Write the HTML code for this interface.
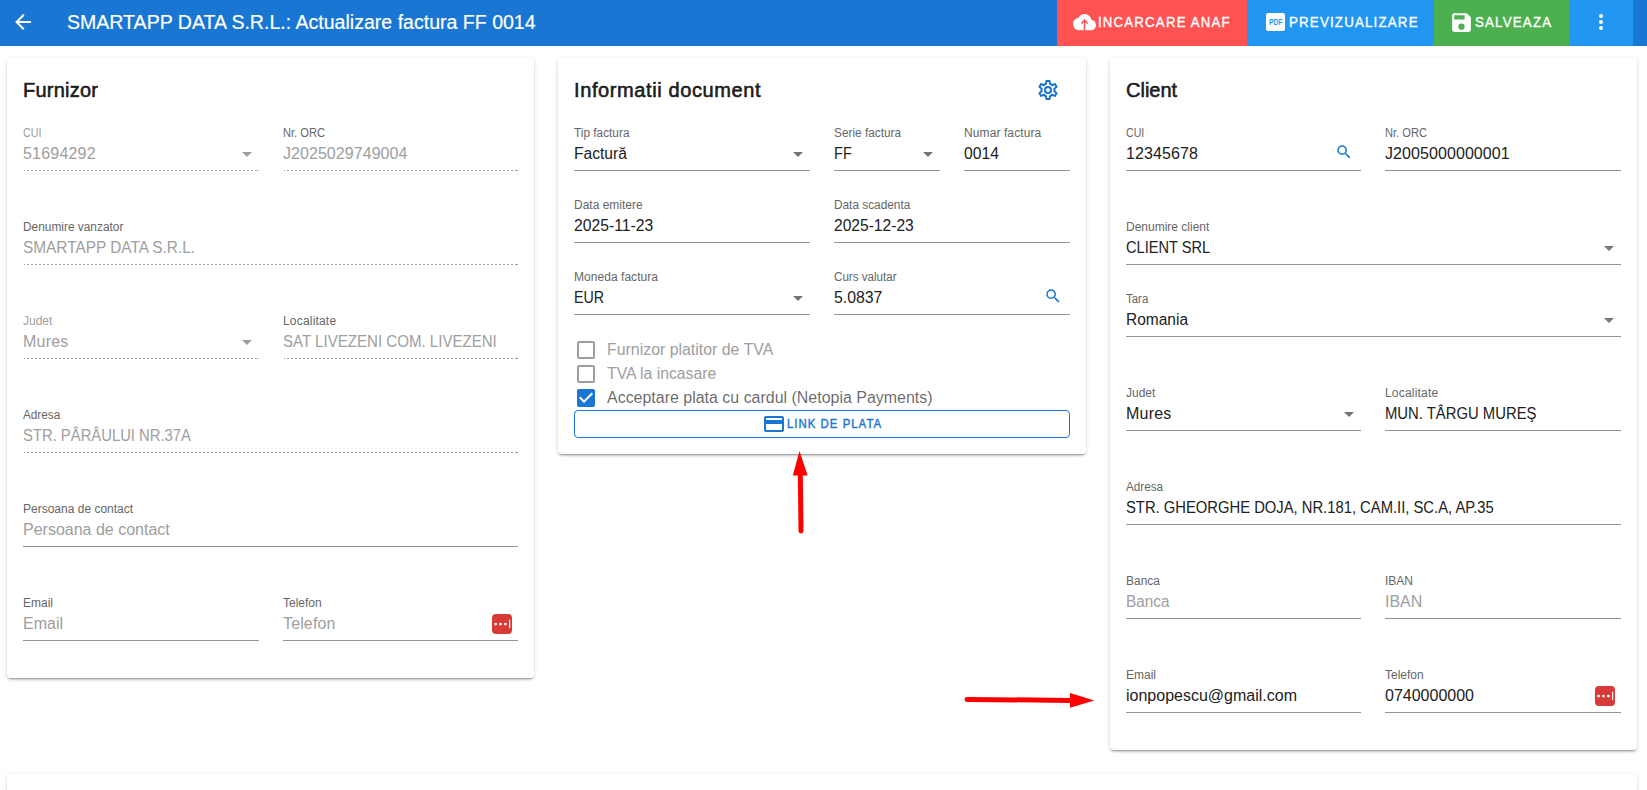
<!DOCTYPE html><html><head><meta charset="utf-8"><title>Actualizare factura</title><style>
*{margin:0;padding:0;box-sizing:border-box}
html,body{width:1647px;height:790px;overflow:hidden;background:#fff;font-family:"Liberation Sans",sans-serif;color:#212121}
.hdr{position:absolute;left:0;top:0;width:1647px;height:46px;background:#1976d2}
.card{position:absolute;background:#fff;border-radius:4px;box-shadow:0 3px 1px -2px rgba(0,0,0,.2),0 2px 2px 0 rgba(0,0,0,.14),0 1px 5px 0 rgba(0,0,0,.12)}
.ttl{position:absolute;font-size:20px;line-height:20px;white-space:nowrap;color:rgba(0,0,0,.87);-webkit-text-stroke:0.6px rgba(0,0,0,.87)}
.f{position:absolute;height:43px}
.f .lab,.f .labd{position:absolute;left:0;top:-1px;font-size:12px;line-height:12px;color:#666666;white-space:nowrap}
.f .labd{color:#9e9e9e}
.f .val,.f .vald,.f .ph{position:absolute;left:0;top:18px;font-size:16px;line-height:16px;color:#212121;white-space:nowrap}
.f .vald,.f .ph{color:#9e9e9e}
.f .u{position:absolute;left:0;right:0;top:42px;height:1px}
.f .u.solid{background:#949494}
.f .u.dash{background:linear-gradient(#fff,#fff) left top/1px 1px no-repeat,linear-gradient(rgba(0,0,0,.38),rgba(0,0,0,.38)) right top/1px 1px no-repeat,repeating-linear-gradient(to right,rgba(0,0,0,.38) 0,rgba(0,0,0,.38) 2px,transparent 2px,transparent 4px)}
.dd{position:absolute;right:0;top:14px;fill:#757575}
.dis .dd{fill:#9e9e9e}
.btn{position:absolute;top:0;height:46px;color:#fff;font-size:14px;white-space:nowrap}
.btn span{position:absolute;top:15px;line-height:14px;-webkit-text-stroke:0.35px #fff}
.btn svg{position:absolute;fill:#fff}
.cb{position:absolute;left:577px;width:18px;height:18px;border:2px solid rgba(0,0,0,.38);border-radius:2px}
.cbt{position:absolute;left:607px;font-size:16px;line-height:16px;white-space:nowrap;color:rgba(0,0,0,.6)}
.lp{position:absolute;width:20px;height:20px;background:#d93a37;border-radius:4px}
</style></head><body>
<div class="hdr"></div>
<svg style="position:absolute;left:11px;top:10px" width="24" height="24" viewBox="0 0 24 24"><path fill="#fff" d="M20,11V13H8L13.5,18.5L12.08,19.92L4.16,12L12.08,4.08L13.5,5.5L8,11H20Z"/></svg>
<div id="t1" style="position:absolute;left:67px;top:12px;font-size:20px;line-height:20px;color:#fff;white-space:nowrap;-webkit-text-stroke:0.2px #fff;transform:scaleX(0.9774);transform-origin:0 0">SMARTAPP DATA S.R.L.: Actualizare factura FF 0014</div>
<div class="btn" style="left:1057px;width:190px;background:#ff5252"><svg style="left:16px;top:9.8px" width="23" height="24.2" viewBox="0 0 24 24" preserveAspectRatio="none"><path d="M19.35,10.03C18.67,6.59 15.64,4 12,4C9.11,4 6.6,5.64 5.35,8.03C2.34,8.36 0,10.9 0,14A6,6 0 0,0 6,20H19A5,5 0 0,0 24,15C24,12.36 21.95,10.22 19.35,10.03Z"/><path d="M12,20.5V9.8M8.7,13.4L12,10L15.3,13.4" fill="none" stroke="#ff5252" stroke-width="1.6"/></svg><span style="left:41px;letter-spacing:1.250px;transform:scaleX(0.9460);transform-origin:0 0" id="t2">INCARCARE ANAF</span></div>
<div class="btn" style="left:1247px;width:187px;background:#2196f3"><div style="position:absolute;left:19.4px;top:13px;width:18.4px;height:18px;background:#fff;border-radius:2px"></div><div style="position:absolute;left:21.9px;top:18.6px;width:16px;font-size:8.2px;line-height:8px;font-weight:700;color:#2196f3;transform:scaleX(0.83);transform-origin:0 0;letter-spacing:0">PDF</div><span style="left:42px;letter-spacing:1.250px;transform:scaleX(0.9500);transform-origin:0 0" id="t3">PREVIZUALIZARE</span></div>
<div class="btn" style="left:1434px;width:135px;background:#4caf50"><svg style="left:15.3px;top:9.9px" width="25" height="25" viewBox="0 0 24 24"><path d="M15,9H5V5H15M12,19A3,3 0 0,1 9,16A3,3 0 0,1 12,13A3,3 0 0,1 15,16A3,3 0 0,1 12,19M17,3H5C3.89,3 3,3.9 3,5V19A2,2 0 0,0 5,21H19A2,2 0 0,0 21,19V7L17,3Z"/></svg><span style="left:41px;letter-spacing:1.250px;transform:scaleX(0.9500);transform-origin:0 0" id="t4">SALVEAZA</span></div>
<div class="btn" style="left:1569px;width:64px;background:#2196f3"><svg style="left:20px;top:10px" width="24" height="24" viewBox="0 0 24 24"><path d="M12,16A2,2 0 0,1 14,18A2,2 0 0,1 12,20A2,2 0 0,1 10,18A2,2 0 0,1 12,16M12,10A2,2 0 0,1 14,12A2,2 0 0,1 12,14A2,2 0 0,1 10,12A2,2 0 0,1 12,10M12,4A2,2 0 0,1 14,6A2,2 0 0,1 12,8A2,2 0 0,1 10,6A2,2 0 0,1 12,4Z"/></svg></div>
<div class="card" style="left:7px;top:58px;width:527px;height:620px"></div>
<div class="card" style="left:558px;top:58px;width:528px;height:396px"></div>
<div class="card" style="left:1110px;top:58px;width:527px;height:692px"></div>
<div class="card" style="left:7px;top:774px;width:1630px;height:200px"></div>
<div class="ttl" id="t5" style="left:23px;top:80px;letter-spacing:0.229px">Furnizor</div>
<div class="f dis" style="left:23px;top:128px;width:236px"><div class="labd" id="t6" style="transform:scaleX(0.9000);transform-origin:0 0">CUI</div><div class="vald" id="t7" style="letter-spacing:0.200px">51694292</div><div class="u dash"></div><svg class="dd" viewBox="0 0 24 24" width="24" height="24"><path d="M7,10L12,15L17,10H7Z"/></svg></div>
<div class="f" style="left:283px;top:128px;width:235px"><div class="lab" id="t8" style="transform:scaleX(0.9250);transform-origin:0 0">Nr. ORC</div><div class="vald" id="t9" style="letter-spacing:0.054px">J2025029749004</div><div class="u dash"></div></div>
<div class="f" style="left:23px;top:222px;width:495px"><div class="lab" id="t10" style="transform:scaleX(0.9901);transform-origin:0 0">Denumire vanzator</div><div class="vald" id="t11" style="transform:scaleX(0.9610);transform-origin:0 0">SMARTAPP DATA S.R.L.</div><div class="u dash"></div></div>
<div class="f dis" style="left:23px;top:316px;width:236px"><div class="labd" id="t12">Judet</div><div class="vald" id="t13" style="letter-spacing:0.225px">Mures</div><div class="u dash"></div><svg class="dd" viewBox="0 0 24 24" width="24" height="24"><path d="M7,10L12,15L17,10H7Z"/></svg></div>
<div class="f" style="left:283px;top:316px;width:235px"><div class="lab" id="t14" style="letter-spacing:0.189px">Localitate</div><div class="vald" id="t15" style="transform:scaleX(0.9418);transform-origin:0 0">SAT LIVEZENI COM. LIVEZENI</div><div class="u dash"></div></div>
<div class="f" style="left:23px;top:410px;width:495px"><div class="lab" id="t16" style="transform:scaleX(0.9789);transform-origin:0 0">Adresa</div><div class="vald" id="t17" style="transform:scaleX(0.9260);transform-origin:0 0">STR. PÂRÂULUI NR.37A</div><div class="u dash"></div></div>
<div class="f" style="left:23px;top:504px;width:495px"><div class="lab" id="t18">Persoana de contact</div><div class="ph" id="t19">Persoana de contact</div><div class="u solid"></div></div>
<div class="f" style="left:23px;top:598px;width:236px"><div class="lab" id="t20">Email</div><div class="ph" id="t21">Email</div><div class="u solid"></div></div>
<div class="f" style="left:283px;top:598px;width:235px"><div class="lab" id="t22">Telefon</div><div class="ph" id="t23" style="letter-spacing:0.133px">Telefon</div><div class="u solid"></div><div class="lp" style="right:5.7px;top:15.7px;width:20.6px;height:20.6px"><svg width="20" height="20" viewBox="0 0 20 20" style="position:absolute;left:0;top:0"><circle cx="3.6" cy="10.1" r="1.45" fill="#fff"/><circle cx="8.5" cy="10.1" r="1.45" fill="#fff"/><circle cx="13.4" cy="10.1" r="1.45" fill="#fff"/><rect x="17" y="5.7" width="1.2" height="8.4" fill="#fff"/></svg></div></div>
<div class="ttl" id="t24" style="left:574px;top:80px;letter-spacing:0.611px">Informatii document</div>
<svg style="position:absolute;left:1036px;top:78px" width="24" height="24" viewBox="0 0 24 24"><path fill="#1976d2" d="M12,8A4,4 0 0,1 16,12A4,4 0 0,1 12,16A4,4 0 0,1 8,12A4,4 0 0,1 12,8M12,10A2,2 0 0,0 10,12A2,2 0 0,0 12,14A2,2 0 0,0 14,12A2,2 0 0,0 12,10M10,22C9.75,22 9.54,21.82 9.5,21.58L9.13,18.93C8.5,18.68 7.96,18.34 7.440,17.94L4.95,18.95C4.73,19.03 4.46,18.95 4.34,18.73L2.34,15.27C2.21,15.05 2.27,14.78 2.46,14.63L4.57,12.97L4.5,12L4.57,11L2.46,9.37C2.27,9.22 2.21,8.95 2.34,8.73L4.34,5.27C4.46,5.05 4.73,4.96 4.95,5.05L7.44,6.05C7.96,5.66 8.5,5.32 9.13,5.07L9.5,2.42C9.54,2.18 9.75,2 10,2H14C14.25,2 14.46,2.18 14.5,2.42L14.87,5.07C15.5,5.32 16.04,5.66 16.56,6.05L19.05,5.05C19.27,4.96 19.54,5.05 19.66,5.27L21.66,8.73C21.79,8.95 21.73,9.22 21.54,9.37L19.43,11L19.5,12L19.43,13L21.54,14.63C21.73,14.78 21.79,15.05 21.66,15.27L19.66,18.73C19.54,18.95 19.27,19.04 19.05,18.95L16.56,17.95C16.04,18.34 15.5,18.68 14.87,18.93L14.5,21.58C14.46,21.82 14.25,22 14,22H10M11.25,4L10.88,6.61C9.68,6.86 8.62,7.5 7.85,8.39L5.44,7.35L4.69,8.65L6.8,10.2C6.4,11.37 6.4,12.64 6.8,13.8L4.68,15.36L5.43,16.66L7.86,15.62C8.63,16.5 9.68,17.14 10.87,17.38L11.24,20H12.76L13.13,17.39C14.32,17.14 15.37,16.5 16.14,15.62L18.57,16.66L19.32,15.36L17.2,13.81C17.6,12.64 17.6,11.37 17.2,10.2L19.31,8.65L18.56,7.35L16.15,8.39C15.38,7.5 14.33,6.86 13.12,6.62L12.75,4H11.25Z"/></svg>
<div class="f" style="left:574px;top:128px;width:236px"><div class="lab" id="t25" style="transform:scaleX(0.9860);transform-origin:0 0">Tip factura</div><div class="val" id="t26" style="transform:scaleX(0.9741);transform-origin:0 0">Factură</div><div class="u solid"></div><svg class="dd" viewBox="0 0 24 24" width="24" height="24"><path d="M7,10L12,15L17,10H7Z"/></svg></div>
<div class="f" style="left:834px;top:128px;width:106px"><div class="lab" id="t27" style="transform:scaleX(0.9853);transform-origin:0 0">Serie factura</div><div class="val" id="t28" style="transform:scaleX(0.9111);transform-origin:0 0">FF</div><div class="u solid"></div><svg class="dd" viewBox="0 0 24 24" width="24" height="24"><path d="M7,10L12,15L17,10H7Z"/></svg></div>
<div class="f" style="left:964px;top:128px;width:106px"><div class="lab" id="t29" style="letter-spacing:0.100px">Numar factura</div><div class="val" id="t30" style="transform:scaleX(0.9806);transform-origin:0 0">0014</div><div class="u solid"></div></div>
<div class="f" style="left:574px;top:200px;width:236px"><div class="lab" id="t31">Data emitere</div><div class="val" id="t32" style="transform:scaleX(0.9815);transform-origin:0 0">2025-11-23</div><div class="u solid"></div></div>
<div class="f" style="left:834px;top:200px;width:236px"><div class="lab" id="t33" style="transform:scaleX(0.9857);transform-origin:0 0">Data scadenta</div><div class="val" id="t34" style="transform:scaleX(0.9744);transform-origin:0 0">2025-12-23</div><div class="u solid"></div></div>
<div class="f" style="left:574px;top:272px;width:236px"><div class="lab" id="t35" style="letter-spacing:0.046px">Moneda factura</div><div class="val" id="t36" style="transform:scaleX(0.8875);transform-origin:0 0">EUR</div><div class="u solid"></div><svg class="dd" viewBox="0 0 24 24" width="24" height="24"><path d="M7,10L12,15L17,10H7Z"/></svg></div>
<div class="f" style="left:834px;top:272px;width:236px"><div class="lab" id="t37" style="transform:scaleX(0.9677);transform-origin:0 0">Curs valutar</div><div class="val" id="t38" style="transform:scaleX(0.9878);transform-origin:0 0">5.0837</div><div class="u solid"></div><svg style="position:absolute;right:8px;top:15px" width="18" height="18" viewBox="0 0 24 24"><path fill="#1976d2" d="M9.5,3A6.5,6.5 0 0,1 16,9.5C16,11.11 15.41,12.59 14.44,13.73L14.71,14H15.5L20.5,19L19,20.5L14,15.5V14.71L13.73,14.44C12.59,15.410 11.11,16 9.5,16A6.5,6.5 0 0,1 3,9.5A6.5,6.5 0 0,1 9.5,3M9.5,5C7,5 5,7 5,9.5C5,12 7,14 9.5,14C12,14 14,12 14,9.5C14,7 12,5 9.5,5Z"/></svg></div>
<svg style="position:absolute;left:574px;top:338px" width="24" height="24" viewBox="0 0 24 24"><path fill="rgba(0,0,0,.38)" d="M19,3H5C3.89,3 3,3.89 3,5V19A2,2 0 0,0 5,21H19A2,2 0 0,0 21,19V5C21,3.89 20.1,3 19,3M19,5V19H5V5H19Z"/></svg>
<div class="cbt" id="t39" style="top:342px;color:#9e9e9e;transform:scaleX(0.9928);transform-origin:0 0">Furnizor platitor de TVA</div>
<svg style="position:absolute;left:574px;top:362px" width="24" height="24" viewBox="0 0 24 24"><path fill="rgba(0,0,0,.38)" d="M19,3H5C3.89,3 3,3.89 3,5V19A2,2 0 0,0 5,21H19A2,2 0 0,0 21,19V5C21,3.89 20.1,3 19,3M19,5V19H5V5H19Z"/></svg>
<div class="cbt" id="t40" style="top:366px;color:#9e9e9e;transform:scaleX(0.9856);transform-origin:0 0">TVA la incasare</div>
<svg style="position:absolute;left:574px;top:386px" width="24" height="24" viewBox="0 0 24 24"><path fill="#1976d2" d="M10,17L5,12L6.41,10.58L10,14.17L17.59,6.58L19,8M19,3H5C3.89,3 3,3.89 3,5V19A2,2 0 0,0 5,21H19A2,2 0 0,0 21,19V5C21,3.89 20.1,3 19,3Z"/></svg>
<div class="cbt" id="t41" style="top:390px;color:rgba(0,0,0,.6);transform:scaleX(0.9975);transform-origin:0 0">Acceptare plata cu cardul (Netopia Payments)</div>
<div style="position:absolute;left:574px;top:410px;width:496px;height:28px;border:1px solid #1976d2;border-radius:4px"></div>
<svg style="position:absolute;left:762px;top:412px" width="24" height="24" viewBox="0 0 24 24"><path fill="#1976d2" d="M20,8H4V6H20M20,18H4V12H20M20,4H4C2.89,4 2,4.89 2,6V18A2,2 0 0,0 4,20H20A2,2 0 0,0 22,18V6C22,4.89 21.1,4 20,4Z"/></svg>
<div id="t42" style="position:absolute;left:787px;top:418px;font-size:12px;line-height:12px;-webkit-text-stroke:0.4px #1976d2;color:#1976d2;white-space:nowrap;letter-spacing:1.070px;transform:scaleX(0.9500);transform-origin:0 0">LINK DE PLATA</div>
<div class="ttl" id="t43" style="left:1126px;top:80px;">Client</div>
<div class="f" style="left:1126px;top:128px;width:235px"><div class="lab" id="t44" style="transform:scaleX(0.8850);transform-origin:0 0">CUI</div><div class="val" id="t45" style="letter-spacing:0.100px">12345678</div><div class="u solid"></div><svg style="position:absolute;right:8px;top:15px" width="18" height="18" viewBox="0 0 24 24"><path fill="#1976d2" d="M9.5,3A6.5,6.5 0 0,1 16,9.5C16,11.11 15.41,12.59 14.44,13.73L14.71,14H15.5L20.5,19L19,20.5L14,15.5V14.71L13.73,14.44C12.59,15.410 11.11,16 9.5,16A6.5,6.5 0 0,1 3,9.5A6.5,6.5 0 0,1 9.5,3M9.5,5C7,5 5,7 5,9.5C5,12 7,14 9.5,14C12,14 14,12 14,9.5C14,7 12,5 9.5,5Z"/></svg></div>
<div class="f" style="left:1385px;top:128px;width:236px"><div class="lab" id="t46" style="transform:scaleX(0.9250);transform-origin:0 0">Nr. ORC</div><div class="val" id="t47" style="letter-spacing:0.077px">J2005000000001</div><div class="u solid"></div></div>
<div class="f" style="left:1126px;top:222px;width:495px"><div class="lab" id="t48">Denumire client</div><div class="val" id="t49" style="transform:scaleX(0.9120);transform-origin:0 0">CLIENT SRL</div><div class="u solid"></div><svg class="dd" viewBox="0 0 24 24" width="24" height="24"><path d="M7,10L12,15L17,10H7Z"/></svg></div>
<div class="f" style="left:1126px;top:294px;width:495px"><div class="lab" id="t50" style="transform:scaleX(0.9542);transform-origin:0 0">Tara</div><div class="val" id="t51" style="transform:scaleX(0.9688);transform-origin:0 0">Romania</div><div class="u solid"></div><svg class="dd" viewBox="0 0 24 24" width="24" height="24"><path d="M7,10L12,15L17,10H7Z"/></svg></div>
<div class="f" style="left:1126px;top:388px;width:235px"><div class="lab" id="t52">Judet</div><div class="val" id="t53" style="letter-spacing:0.225px">Mures</div><div class="u solid"></div><svg class="dd" viewBox="0 0 24 24" width="24" height="24"><path d="M7,10L12,15L17,10H7Z"/></svg></div>
<div class="f" style="left:1385px;top:388px;width:236px"><div class="lab" id="t54" style="letter-spacing:0.200px">Localitate</div><div class="val" id="t55" style="transform:scaleX(0.9278);transform-origin:0 0">MUN. TÂRGU MUREŞ</div><div class="u solid"></div></div>
<div class="f" style="left:1126px;top:482px;width:495px"><div class="lab" id="t56" style="transform:scaleX(0.9737);transform-origin:0 0">Adresa</div><div class="val" id="t57" style="transform:scaleX(0.9239);transform-origin:0 0">STR. GHEORGHE DOJA, NR.181, CAM.II, SC.A, AP.35</div><div class="u solid"></div></div>
<div class="f" style="left:1126px;top:576px;width:235px"><div class="lab" id="t58">Banca</div><div class="ph" id="t59" style="transform:scaleX(0.9578);transform-origin:0 0">Banca</div><div class="u solid"></div></div>
<div class="f" style="left:1385px;top:576px;width:236px"><div class="lab" id="t60">IBAN</div><div class="ph" id="t61">IBAN</div><div class="u solid"></div></div>
<div class="f" style="left:1126px;top:670px;width:235px"><div class="lab" id="t62">Email</div><div class="val" id="t63">ionpopescu@gmail.com</div><div class="u solid"></div></div>
<div class="f" style="left:1385px;top:670px;width:236px"><div class="lab" id="t64">Telefon</div><div class="val" id="t65">0740000000</div><div class="u solid"></div><div class="lp" style="right:5.7px;top:15.7px;width:20.6px;height:20.6px"><svg width="20" height="20" viewBox="0 0 20 20" style="position:absolute;left:0;top:0"><circle cx="3.6" cy="10.1" r="1.45" fill="#fff"/><circle cx="8.5" cy="10.1" r="1.45" fill="#fff"/><circle cx="13.4" cy="10.1" r="1.45" fill="#fff"/><rect x="17" y="5.7" width="1.2" height="8.4" fill="#fff"/></svg></div></div>
<svg style="position:absolute;left:0;top:0" width="1647" height="790"><line x1="801" y1="531" x2="800.3" y2="474" stroke="#f00" stroke-width="5" stroke-linecap="round"/><polygon points="799.5,451 792.8,475.5 807.6,475.5" fill="#f00"/><line x1="967" y1="699.4" x2="1071" y2="700.4" stroke="#f00" stroke-width="5" stroke-linecap="round"/><polygon points="1094.3,700.4 1070,693.1 1070,707.7" fill="#f00"/></svg>
</body></html>
